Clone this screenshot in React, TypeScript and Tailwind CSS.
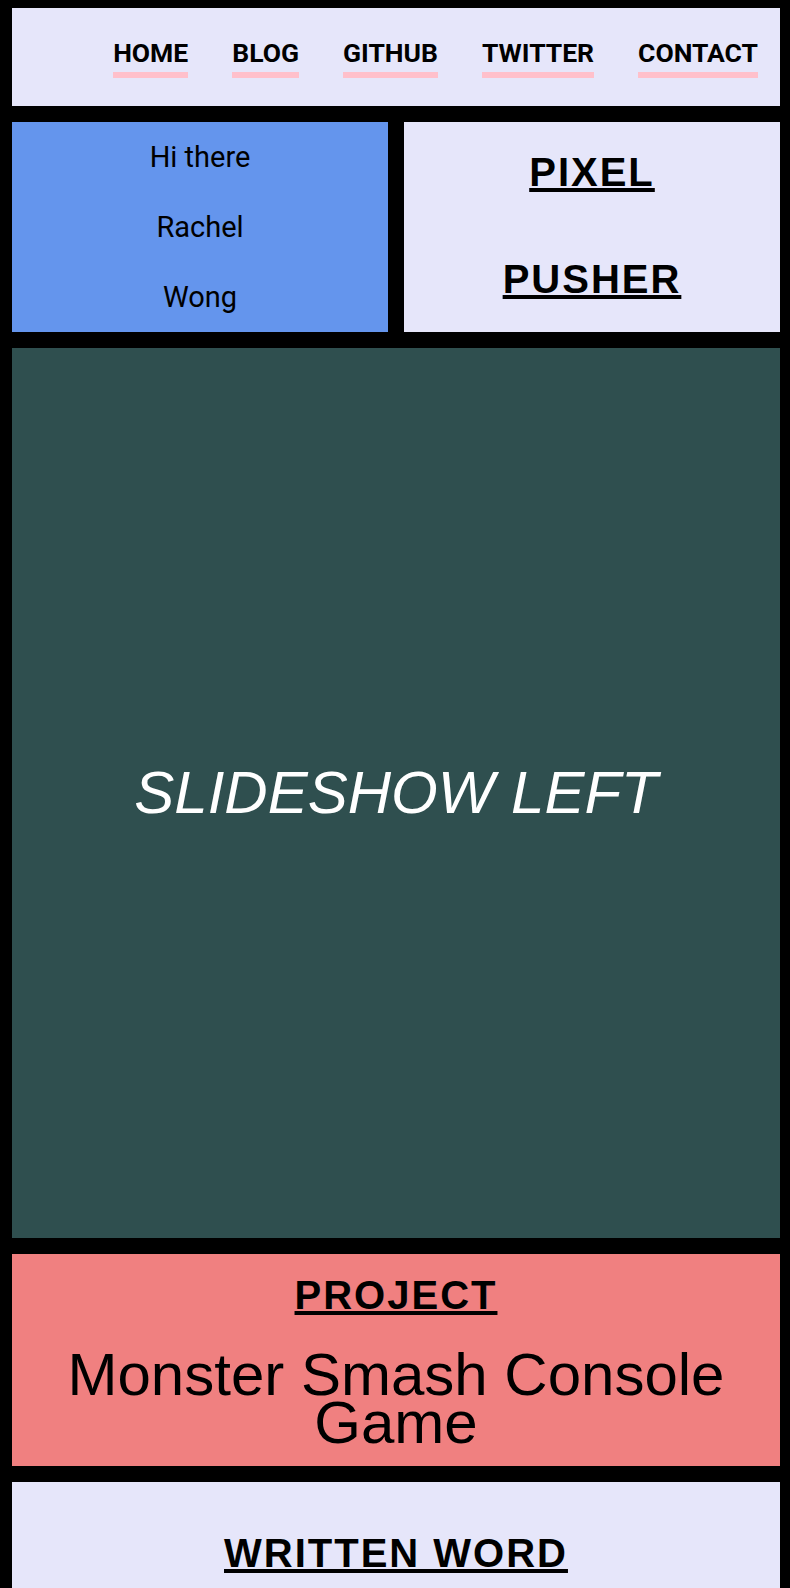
const navLinks = ["HOME", "BLOG", "GITHUB", "TWITTER", "CONTACT"]

function NavBar() {
  return (
    <nav className="flex h-[98px] items-start justify-end bg-[#e6e6fa] pt-[31px]">
      {navLinks.map((label) => (
        <a
          key={label}
          href="#"
          className="mx-[22px] inline-block border-b-[6px] border-[#ffc0cb] pb-[5px] font-['Roboto',sans-serif] text-[26.5px] font-bold leading-[28px] text-black"
        >
          {label}
        </a>
      ))}
    </nav>
  )
}

function Heading({ children }: { children: string }) {
  return (
    <h2 className="font-['Liberation_Sans',Arial,sans-serif] text-[40px] font-bold leading-[46px] tracking-[2px] text-black underline">
      {children}
    </h2>
  )
}

export default function App() {
  return (
    <div className="flex min-h-screen flex-col gap-[16px] bg-black pl-[12px] pr-[10px] pt-[8px]">
      <NavBar />

      <div className="grid grid-cols-2 gap-[16px]">
        <div className="flex h-[210px] flex-col bg-[#6495ed] text-center font-['Roboto',sans-serif] text-[29px] leading-[70px] text-black">
          <p>Hi there</p>
          <p>Rachel</p>
          <p>Wong</p>
        </div>
        <div className="flex h-[210px] flex-col items-center gap-[61px] bg-[#e6e6fa] pt-[27px] text-center">
          <Heading>PIXEL</Heading>
          <Heading>PUSHER</Heading>
        </div>
      </div>

      <div className="flex h-[890px] items-center justify-center bg-[#2f4f4f]">
        <span className="font-['Liberation_Sans',Arial,sans-serif] text-[60px] italic leading-normal text-white">
          SLIDESHOW LEFT
        </span>
      </div>

      <div className="flex h-[212px] flex-col items-center bg-[#f08080] pt-[18px] text-center">
        <Heading>PROJECT</Heading>
        <p className="mt-[33px] px-[20px] font-['Liberation_Sans',Arial,sans-serif] text-[60px] leading-[48px] text-black">
          Monster Smash Console Game
        </p>
      </div>

      <div className="flex h-[210px] flex-col items-center bg-[#e6e6fa] pt-[48px] text-center">
        <Heading>WRITTEN WORD</Heading>
      </div>
    </div>
  )
}
